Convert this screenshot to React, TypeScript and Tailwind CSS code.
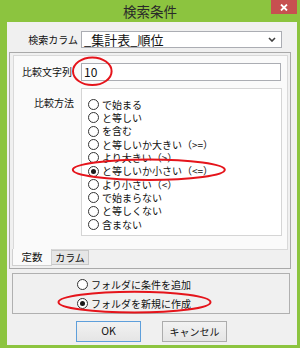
const jp = "font-['Noto_Sans_CJK_JP','Noto_Sans',sans-serif]";

const methods = [
  "で始まる",
  "と等しい",
  "を含む",
  "と等しいか大きい（>=）",
  "より大きい（>）",
  "と等しいか小さい（<=）",
  "より小さい（<）",
  "で始まらない",
  "と等しくない",
  "含まない",
];

function Radio({ label, checked = false, rowClass }: { label: string; checked?: boolean; rowClass: string }) {
  return (
    <div className={`flex items-center ${rowClass}`}>
      <span className="w-[11px] h-[11px] rounded-full border border-[#333333] bg-white flex items-center justify-center shrink-0">
        {checked && <span className="w-[5px] h-[5px] rounded-full bg-[#1a1a1a]" />}
      </span>
      <span className="ml-[3px] text-[10px] leading-none text-[#111111] whitespace-nowrap">{label}</span>
    </div>
  );
}

export default function App() {
  return (
    <div className={`relative w-[300px] h-[348px] bg-[#8cc43f] flex flex-col ${jp}`}>
      {/* title bar */}
      <div className="h-[22px] shrink-0 grid grid-cols-[1fr_auto_1fr]">
        <div />
        <div className="text-[13.5px] leading-[22px] text-[#2a2a2a]">検索条件</div>
        <div className="flex justify-end">
          <div className="mr-[3px] w-[26px] h-[14px] bg-[#c75050] flex items-center justify-center">
            <svg width="8" height="7" viewBox="0 0 8 7">
              <path d="M1 0.5 L7 6.5 M7 0.5 L1 6.5" stroke="#ffffff" strokeWidth="1.8" />
            </svg>
          </div>
        </div>
      </div>

      {/* client area */}
      <div className="ml-[7px] mr-[3px] mb-[3px] flex-1 bg-[#f0f0f0] flex flex-col">
        <div className="mt-[9px] flex items-center h-[17px]">
          <div className="w-[71px] text-right text-[10px] leading-none text-[#111111]">検索カラム</div>
          <div className="ml-[3px] w-[201px] h-[17px] border border-[#abadb3] bg-white flex items-center justify-between pl-[2px] pr-[5px]">
            <span className="text-[13px] leading-none text-[#111111]">_集計表_順位</span>
            <svg width="8" height="5" viewBox="0 0 8 5">
              <path d="M1 1 L4 4 L7 1" stroke="#404040" strokeWidth="1.6" fill="none" />
            </svg>
          </div>
        </div>

        {/* tab control */}
        <div className="mt-[4px] ml-[2px] w-[282px] h-[217px] border border-[#a9a9a9] pt-[2px] px-[3px] flex flex-col">
          <div className="w-[275px] h-[195px] border border-[#d9d9d9] bg-[#fafafa] flex flex-col">
            <div className="mt-[7px] flex items-center h-[18px]">
              <div className="w-[58px] text-right text-[10px] leading-none text-[#111111] whitespace-nowrap">比較文字列</div>
              <div className="ml-[9px] w-[200px] h-[18px] border border-[#abadb3] bg-white flex items-center pl-[2px]">
                <span className="text-[12px] leading-none text-[#111111]">10</span>
              </div>
            </div>
            <div className="mt-[7px] flex">
              <div className="w-[60px] pt-[10px] text-right text-[10px] leading-none text-[#111111]">比較方法</div>
              <div className="ml-[7px] w-[201px] h-[148px] border border-[#d5d5d5] bg-white pt-[9px] pl-[6px]">
                {methods.map((m, i) => (
                  <Radio key={m} label={m} checked={i === 5} rowClass="h-[13.33px]" />
                ))}
              </div>
            </div>
          </div>
          <div className="flex -mt-px">
            <div className="relative -ml-px w-[40px] h-[17px] border border-t-0 border-[#d0d0d0] bg-[#fafafa] flex items-center justify-center text-[10.5px] leading-none text-[#111111]">
              定数
            </div>
            <div className="mt-px w-[37px] h-[15px] border border-l-0 border-[#c8c8c8] bg-[#e6e6e6] flex items-center justify-center text-[10px] leading-none text-[#111111]">
              カラム
            </div>
          </div>
        </div>

        {/* folder options */}
        <div className="mt-[4px] ml-[5px] w-[278px] h-[41px] border border-[#b0b0b0] pt-[1px] pl-[64px]">
          <Radio label="フォルダに条件を追加" rowClass="h-[19px]" />
          <Radio label="フォルダを新規に作成" checked rowClass="h-[19px]" />
        </div>

        <div className="mt-[7px] flex">
          <button className="ml-[69px] w-[65px] h-[21px] border border-[#5e9fdb] bg-linear-to-b from-[#f2f2f2] to-[#e5e5e5] text-[10.5px] leading-none text-[#111111]">
            OK
          </button>
          <button className="ml-[21px] w-[65px] h-[21px] border border-[#acacac] bg-linear-to-b from-[#f2f2f2] to-[#e5e5e5] text-[10px] leading-none text-[#111111]">
            キャンセル
          </button>
        </div>
      </div>

      {/* red annotation marks drawn over the dialog */}
      <svg className="absolute inset-0 pointer-events-none" width="300" height="348" viewBox="0 0 300 348">
        <ellipse cx="92.3" cy="71.2" rx="19.3" ry="13.8" fill="none" stroke="#e5141b" strokeWidth="2" />
        <ellipse cx="148.8" cy="169.7" rx="76" ry="10.3" fill="none" stroke="#e5141b" strokeWidth="2" />
        <ellipse cx="134.5" cy="302.2" rx="76" ry="10.4" fill="none" stroke="#e5141b" strokeWidth="2" />
      </svg>
    </div>
  );
}
